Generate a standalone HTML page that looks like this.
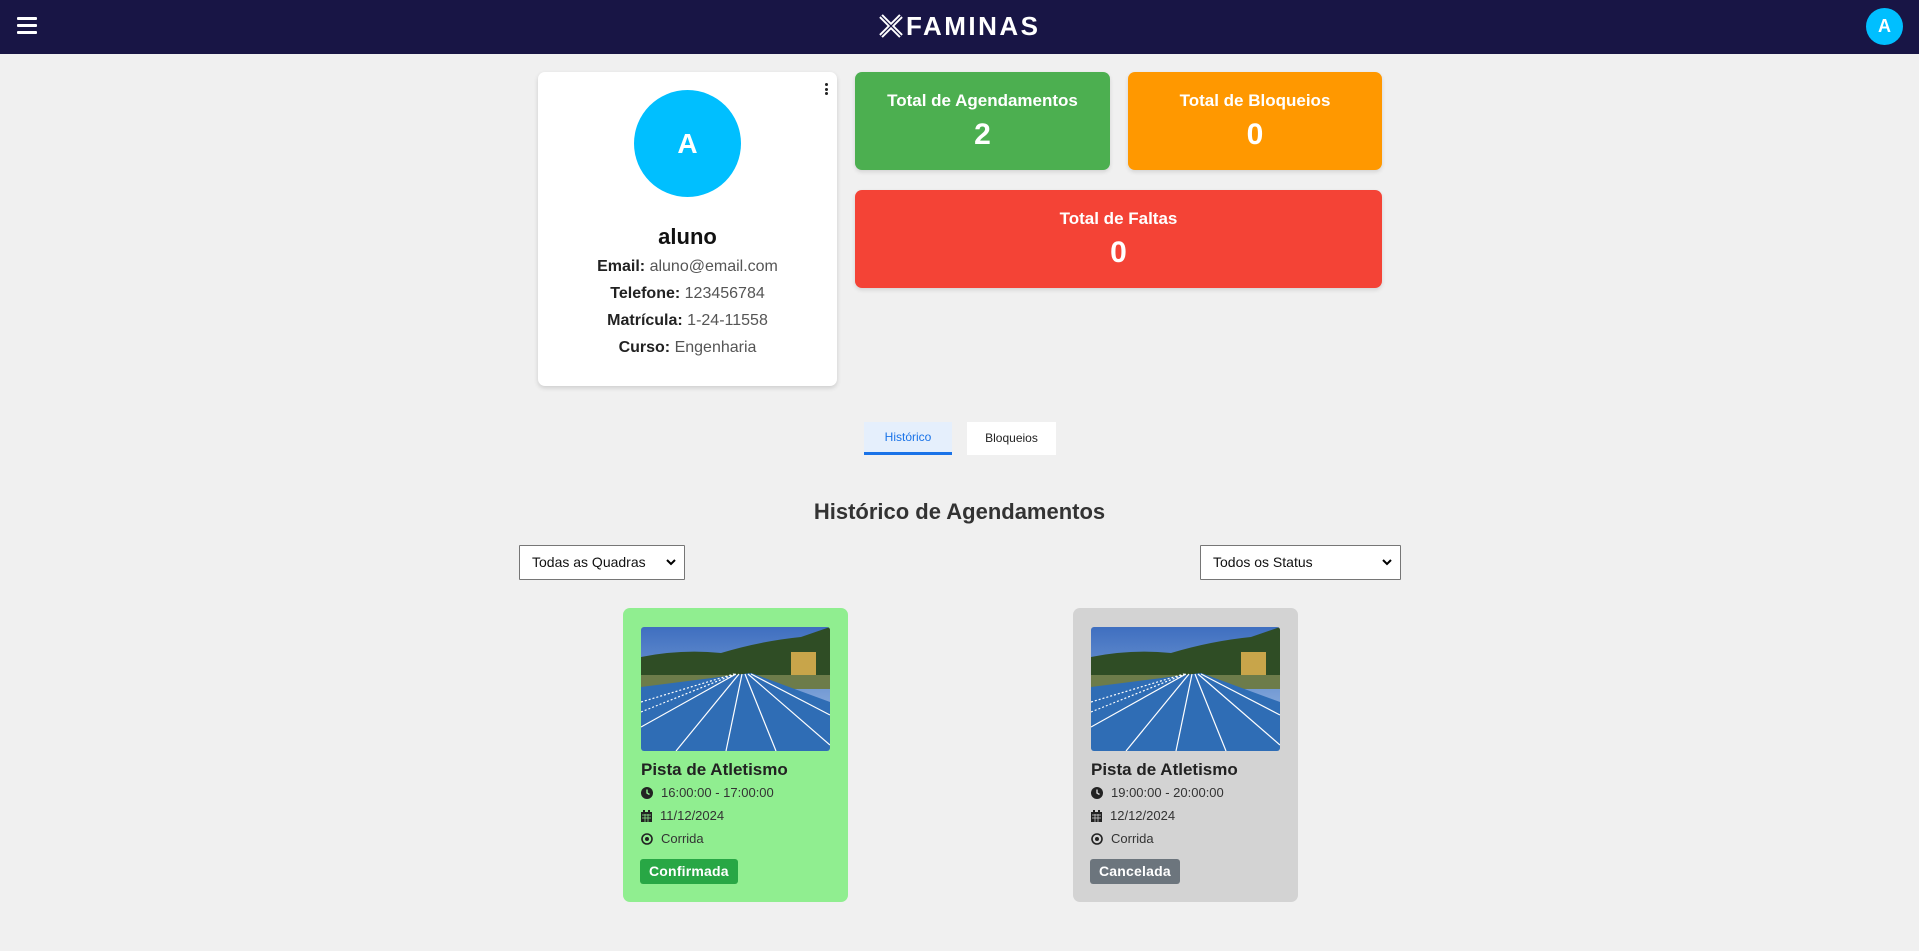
<!DOCTYPE html>
<html><head><meta charset="utf-8"><style>
*{box-sizing:border-box;margin:0;padding:0}
body{width:1919px;height:951px;background:#f0f0f0;font-family:"Liberation Sans",Arial,sans-serif;position:relative;overflow:hidden;color:#222}
.abs{position:absolute}
.nav{left:0;top:0;width:1919px;height:54px;background:#181545}
.ham span{position:absolute;left:17px;width:20px;height:3px;background:#fff;border-radius:1px}
.pc{left:538px;top:72px;width:299px;height:314px;background:#fff;border-radius:7px;box-shadow:0 2px 5px rgba(0,0,0,.15)}
.stat{border-radius:7px;color:#fff;text-align:center;box-shadow:0 2px 4px rgba(0,0,0,.12)}
.stat .t{position:absolute;left:0;right:0;top:19px;font-weight:bold;font-size:17px}
.stat .n{position:absolute;left:0;right:0;top:46px;font-weight:bold;font-size:30px}
.info{position:absolute;left:0;right:0;text-align:center;font-size:16px;color:#555}
.info b{color:#222}
.sel{background:#fff;border:1px solid #767676;font-size:14px;color:#111;padding:0 0 0 12px;line-height:33px;border-radius:1px}
.sel svg{position:absolute;right:8px;top:13px}
.card{border-radius:7px}
.card .tt{position:absolute;left:18px;top:152px;font-weight:bold;font-size:17px;color:#222}
.card .ln{position:absolute;left:18px;font-size:13px;color:#333;display:flex;align-items:center}
.card .ln svg{margin-right:8px}
.badge{position:absolute;left:17px;top:251px;height:25px;padding:0 9px;line-height:25px;color:#fff;font-weight:bold;font-size:14px;border-radius:3px;letter-spacing:.2px}
</style></head><body>
<div class="abs nav">
 <div class="ham"><span style="top:17px"></span><span style="top:24px"></span><span style="top:31px"></span></div>
 <div class="abs" style="left:879px;top:14px;display:flex;align-items:center">
  <svg width="24" height="24" viewBox="0 0 24 24"><path d="M2 2 L22 22 M22 2 L2 22" stroke="#fff" stroke-width="5"/><path d="M2 2 L22 22 M22 2 L2 22" stroke="#181545" stroke-width="1.2"/></svg>
  <span style="color:#fff;font-size:26px;letter-spacing:2.5px;margin-left:3px;font-weight:bold;line-height:24px">FAMINAS</span>
 </div>
 <div class="abs" style="left:1866px;top:8px;width:37px;height:37px;border-radius:50%;background:#00bfff;color:#fff;font-weight:bold;font-size:18px;text-align:center;line-height:37px">A</div>
</div>

<div class="abs pc">
 <div class="abs" style="left:287px;top:11px;width:3px">
  <div style="width:3px;height:3px;background:#222;border-radius:50%;margin-bottom:1.5px"></div><div style="width:3px;height:3px;background:#222;border-radius:50%;margin-bottom:1.5px"></div><div style="width:3px;height:3px;background:#222;border-radius:50%"></div>
 </div>
 <div class="abs" style="left:96px;top:18px;width:107px;height:107px;border-radius:50%;background:#00bfff;color:#fff;font-weight:bold;font-size:28px;text-align:center;line-height:107px">A</div>
 <div class="info" style="top:152px;font-size:22px;font-weight:bold;color:#111">aluno</div>
 <div class="info" style="top:186px"><b>Email:</b> aluno@email.com</div>
 <div class="info" style="top:213px"><b>Telefone:</b> 123456784</div>
 <div class="info" style="top:240px"><b>Matrícula:</b> 1-24-11558</div>
 <div class="info" style="top:267px"><b>Curso:</b> Engenharia</div>
</div>

<div class="abs stat" style="left:855px;top:72px;width:255px;height:98px;background:#4caf50"><div class="t">Total de Agendamentos</div><div class="n">2</div></div>
<div class="abs stat" style="left:1128px;top:72px;width:254px;height:98px;background:#ff9800"><div class="t">Total de Bloqueios</div><div class="n">0</div></div>
<div class="abs stat" style="left:855px;top:190px;width:527px;height:98px;background:#f44336"><div class="t">Total de Faltas</div><div class="n">0</div></div>

<div class="abs" style="left:864px;top:422px;width:88px;height:33px;background:#e5effc;border-bottom:3px solid #1a73e8;color:#1a73e8;font-size:12px;text-align:center;line-height:31px">Histórico</div>
<div class="abs" style="left:967px;top:422px;width:89px;height:33px;background:#fff;color:#222;font-size:12px;text-align:center;line-height:33px">Bloqueios</div>

<div class="abs" style="left:0;width:1919px;top:499px;text-align:center;font-size:22px;font-weight:bold;color:#333">Histórico de Agendamentos</div>

<div class="abs sel" style="left:519px;top:545px;width:166px;height:35px">Todas as Quadras<svg width="10" height="7" viewBox="0 0 10 7"><path d="M1 1 L5 5 L9 1" stroke="#000" stroke-width="2" fill="none"/></svg></div>
<div class="abs sel" style="left:1200px;top:545px;width:201px;height:35px">Todos os Status<svg width="10" height="7" viewBox="0 0 10 7"><path d="M1 1 L5 5 L9 1" stroke="#000" stroke-width="2" fill="none"/></svg></div>

<svg width="0" height="0" style="position:absolute"><defs>
<linearGradient id="sky" x1="0" y1="0" x2="0" y2="1"><stop offset="0" stop-color="#3f6fc0"/><stop offset="1" stop-color="#a9c6e8"/></linearGradient>
<symbol id="img" viewBox="0 0 189 124">
<rect width="189" height="124" fill="url(#sky)"/>
<path d="M0 30 Q40 22 80 26 Q120 14 160 10 L189 0 L189 60 L0 60Z" fill="#2f4d25"/>
<path d="M150 25 L175 25 L175 60 L150 60Z" fill="#c8a54a"/>
<path d="M0 48 L189 48 L189 62 L0 62Z" fill="#6d7c4a"/>
<path d="M0 60 L110 46 L189 75 L189 124 L0 124Z" fill="#2f6db5"/>
<g stroke="#fff" stroke-width="1.2" fill="none">
<path d="M0 100 L95 47"/><path d="M35 124 L98 47"/><path d="M85 124 L101 47"/><path d="M135 124 L104 47"/><path d="M189 118 L107 47"/><path d="M189 88 L110 47"/>
<path d="M0 75 L93 47" stroke-dasharray="2 2"/><path d="M0 85 L94 47" stroke-dasharray="2 2"/>
</g>
</symbol>
</defs></svg>

<div class="abs card" style="left:623px;top:608px;width:225px;height:294px;background:#90ee90">
 <svg class="abs" style="left:18px;top:19px;border-radius:3px" width="189" height="124"><use href="#img"/></svg>
 <div class="tt">Pista de Atletismo</div>
 <div class="ln" style="top:177px"><svg width="12" height="12" viewBox="0 0 12 12"><circle cx="6" cy="6" r="6" fill="#222"/><path d="M6 2.5 V6 L8.5 7.5" stroke="#90ee90" stroke-width="1.4" fill="none"/></svg>16:00:00 - 17:00:00</div>
 <div class="ln" style="top:200px"><svg width="11" height="12" viewBox="0 0 11 12"><rect x="0" y="2" width="11" height="10" fill="#222"/><rect x="2" y="0" width="2" height="3" fill="#222"/><rect x="7" y="0" width="2" height="3" fill="#222"/><path d="M1 5H10M1 8H10M4 4V12M7 4V12" stroke="#90ee90" stroke-width=".7"/></svg>11/12/2024</div>
 <div class="ln" style="top:223px"><svg width="12" height="12" viewBox="0 0 12 12"><circle cx="6" cy="6" r="5" fill="none" stroke="#222" stroke-width="1.6"/><circle cx="6" cy="6" r="2" fill="#222"/></svg>Corrida</div>
 <div class="badge" style="background:#28a745">Confirmada</div>
</div>

<div class="abs card" style="left:1073px;top:608px;width:225px;height:294px;background:#d3d3d3">
 <svg class="abs" style="left:18px;top:19px;border-radius:3px" width="189" height="124"><use href="#img"/></svg>
 <div class="tt">Pista de Atletismo</div>
 <div class="ln" style="top:177px"><svg width="12" height="12" viewBox="0 0 12 12"><circle cx="6" cy="6" r="6" fill="#222"/><path d="M6 2.5 V6 L8.5 7.5" stroke="#d3d3d3" stroke-width="1.4" fill="none"/></svg>19:00:00 - 20:00:00</div>
 <div class="ln" style="top:200px"><svg width="11" height="12" viewBox="0 0 11 12"><rect x="0" y="2" width="11" height="10" fill="#222"/><rect x="2" y="0" width="2" height="3" fill="#222"/><rect x="7" y="0" width="2" height="3" fill="#222"/><path d="M1 5H10M1 8H10M4 4V12M7 4V12" stroke="#d3d3d3" stroke-width=".7"/></svg>12/12/2024</div>
 <div class="ln" style="top:223px"><svg width="12" height="12" viewBox="0 0 12 12"><circle cx="6" cy="6" r="5" fill="none" stroke="#222" stroke-width="1.6"/><circle cx="6" cy="6" r="2" fill="#222"/></svg>Corrida</div>
 <div class="badge" style="background:#6c757d">Cancelada</div>
</div>
</body></html>
